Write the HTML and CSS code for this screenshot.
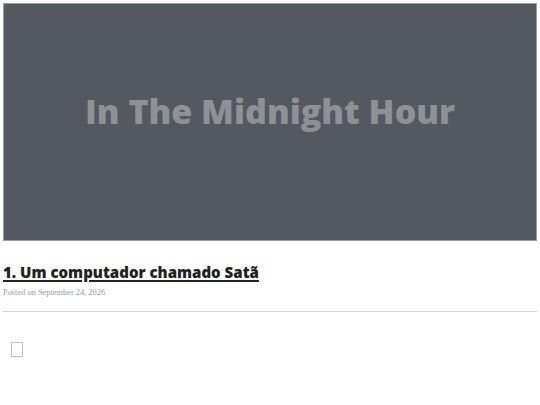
FILE: index.html
```html
<!DOCTYPE html>
<html lang="pt">
<head>
<meta charset="utf-8">
<title>In The Midnight Hour</title>
<link rel="stylesheet" href="styles.css">
</head>
<body>
<div class="page">
  <header class="hero">
    <h1 class="hero-title">In The Midnight Hour</h1>
  </header>
  <article class="post">
    <h2 class="post-title"><a href="#">1. Um computador chamado Satã</a></h2>
    <div class="post-meta">Posted on September 24, 2026</div>
    <hr class="divider">
    <div class="post-body">
      <span class="broken-img" aria-hidden="true"></span>
    </div>
  </article>
</div>
</body>
</html>
```
FILE: styles.css
```css
html, body {
  margin: 0;
  padding: 0;
  background: #ffffff;
}
.page {
  padding: 3px;
  width: 534px;
}
.hero {
  box-sizing: border-box;
  height: 238px;
  padding-bottom: 22px;
  background: #535861;
  border: 1px solid #9a9ca0;
  display: flex;
  align-items: center;
  justify-content: center;
}
.hero-title {
  margin: 0;
  font-family: "Open Sans", sans-serif;
  font-weight: 800;
  font-size: 34px;
  color: #8e9196;
}
.post {
  padding-top: 20px;
}
.post-title {
  margin: 0;
  font-family: "Open Sans", sans-serif;
  font-weight: 800;
  font-size: 15.05px;
  line-height: 22px;
}
.post-title a {
  color: #222222;
  text-decoration: underline;
  text-decoration-thickness: 2px;
  text-underline-offset: 2px;
}
.post-meta {
  margin-top: 5px;
  font-family: "Liberation Serif", serif;
  font-size: 8.4px;
  color: #9a9a9a;
}
.divider {
  margin: 14px 0 0 0;
  border: 0;
  border-top: 1px solid #d6d6d6;
  height: 0;
}
.post-body {
  padding: 30px 0 0 8px;
}
.broken-img {
  display: block;
  box-sizing: border-box;
  width: 12px;
  height: 15px;
  border: 1px solid #c0c0c0;
}
```
